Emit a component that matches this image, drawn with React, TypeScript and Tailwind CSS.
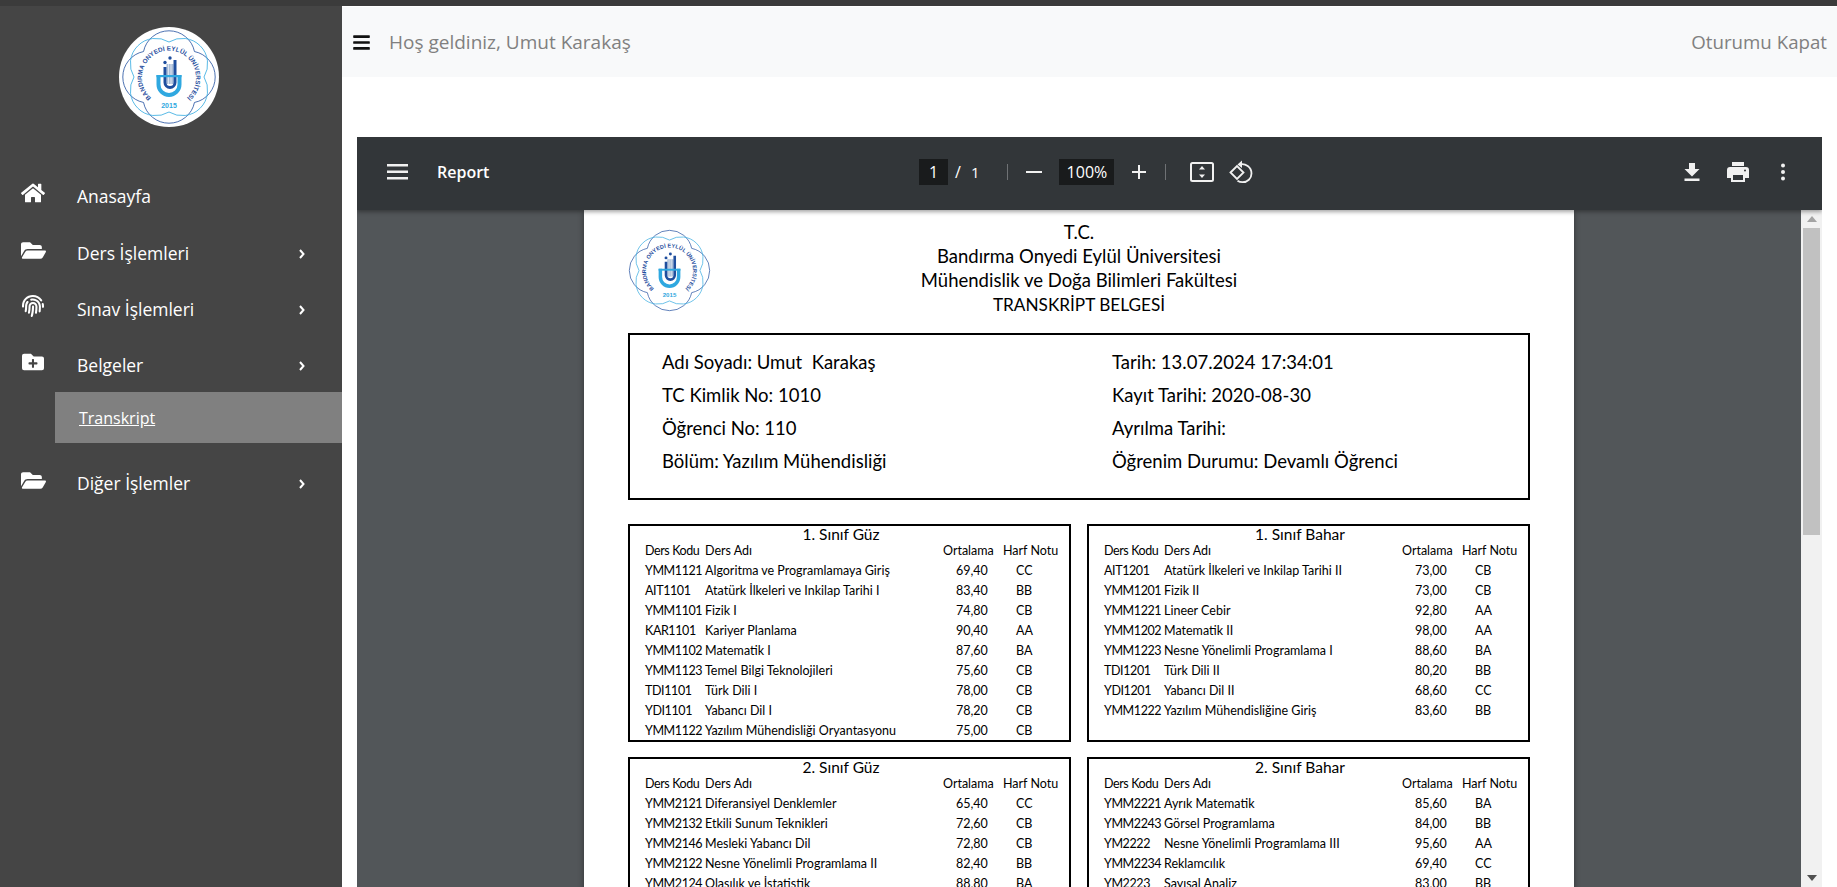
import React from "react";
import { FaHome, FaFolderOpen, FaFingerprint, FaFolderPlus, FaBars } from "react-icons/fa";

function lobes(start: number, cusp: number, r: number) {
  let d = "";
  for (let i = 0; i < 4; i++) {
    const c = start + i * 90;
    const a = ((c - 45 - 90) * Math.PI) / 180;
    const b = ((c + 45 - 90) * Math.PI) / 180;
    const x1 = 50 + cusp * Math.cos(a);
    const y1 = 50 + cusp * Math.sin(a);
    const x2 = 50 + cusp * Math.cos(b);
    const y2 = 50 + cusp * Math.sin(b);
    d += `${i === 0 ? "M" : "L"}${x1.toFixed(2)} ${y1.toFixed(2)}A${r} ${r} 0 0 1 ${x2.toFixed(2)} ${y2.toFixed(2)}`;
  }
  return d + "Z";
}

function Seal({ id, ring, size }: { id: string; ring: boolean; size: number }) {
  return (
    <svg width={size} height={size} viewBox="0 0 100 100" className="block shrink-0">
      {ring && <circle cx="50" cy="50" r="50" fill="#ffffff" />}
      <path d={lobes(0, 36, 26)} fill="none" stroke="#1f4e9e" strokeWidth="0.8" />
      <path d={lobes(45, 35, 25.5)} fill="none" stroke="#2fa8e0" strokeWidth="0.8" />
      <defs>
        <path id={id} d="M33 71.500A27 27 0 1 1 67 71.500" />
      </defs>
      <text fontFamily="'Liberation Sans', sans-serif" fontSize="6.300" fontWeight="700" fill="#1f4e9e">
        <textPath href={`#${id}`} startOffset="50%" textAnchor="middle" textLength="130">BANDIRMA ONYEDİ EYLÜL ÜNİVERSİTESİ</textPath>
      </text>
      <path d="M39.500 48V57.500a10.500 10.500 0 0 0 21 0V48" fill="none" stroke="#2fa8e0" strokeWidth="4" />
      <rect x="47.500" y="37" width="7" height="20" fill="#a9bdd8" />
      <path d="M49.500 37v20M52 37v20" stroke="#ffffff" strokeWidth="0.6" />
      <path d="M46 40V55.500a5 5 0 0 0 10 0V33" fill="none" stroke="#1f4e9e" strokeWidth="3" />
      <rect x="37.500" y="48" width="25" height="2.200" fill="#2fa8e0" />
      <circle cx="46" cy="35.500" r="1.700" fill="#1f4e9e" />
      <circle cx="51" cy="31" r="1.700" fill="#1f4e9e" />
      <text x="50" y="81" textAnchor="middle" fontFamily="'Liberation Sans', sans-serif" fontWeight="700" fontSize="7" fill="#2fa8e0">2015</text>
    </svg>
  );
}

const nav = [
  { icon: <FaFolderOpen size={25} />, label: "Ders İşlemleri" },
  { icon: <FaFingerprint size={22} />, label: "Sınav İşlemleri" },
  { icon: <FaFolderPlus size={22} />, label: "Belgeler" },
];

function NavRow({ icon, label, chevron = true }: { icon: React.ReactNode; label: string; chevron?: boolean }) {
  return (
    <div className="flex h-[56px] items-center pl-[20px] text-white">
      <span className="flex w-[57px] -translate-y-[3px] items-center"><span className="flex w-[26px] justify-center">{icon}</span></span>
      <span className="text-[17.5px]">{label}</span>
      {chevron && (
        <svg width="6" height="10" viewBox="0 0 6 10" className="ml-auto mr-[37px] translate-y-px">
          <path d="M1 1l3.500 4L1 9" fill="none" stroke="#ffffff" strokeWidth="2" />
        </svg>
      )}
    </div>
  );
}

type Row = [string, string, string, string];
const terms: { title: string; rows: Row[] }[] = [
  {
    title: "1. Sınıf Güz",
    rows: [
      ["YMM1121", "Algoritma ve Programlamaya Giriş", "69,40", "CC"],
      ["AIT1101", "Atatürk İlkeleri ve Inkilap Tarihi I", "83,40", "BB"],
      ["YMM1101", "Fizik I", "74,80", "CB"],
      ["KAR1101", "Kariyer Planlama", "90,40", "AA"],
      ["YMM1102", "Matematik I", "87,60", "BA"],
      ["YMM1123", "Temel Bilgi Teknolojileri", "75,60", "CB"],
      ["TDI1101", "Türk Dili I", "78,00", "CB"],
      ["YDI1101", "Yabancı Dil I", "78,20", "CB"],
      ["YMM1122", "Yazılım Mühendisliği Oryantasyonu", "75,00", "CB"],
    ],
  },
  {
    title: "1. Sınıf Bahar",
    rows: [
      ["AIT1201", "Atatürk İlkeleri ve Inkilap Tarihi II", "73,00", "CB"],
      ["YMM1201", "Fizik II", "73,00", "CB"],
      ["YMM1221", "Lineer Cebir", "92,80", "AA"],
      ["YMM1202", "Matematik II", "98,00", "AA"],
      ["YMM1223", "Nesne Yönelimli Programlama I", "88,60", "BA"],
      ["TDI1201", "Türk Dili II", "80,20", "BB"],
      ["YDI1201", "Yabancı Dil II", "68,60", "CC"],
      ["YMM1222", "Yazılım Mühendisliğine Giriş", "83,60", "BB"],
    ],
  },
  {
    title: "2. Sınıf Güz",
    rows: [
      ["YMM2121", "Diferansiyel Denklemler", "65,40", "CC"],
      ["YMM2132", "Etkili Sunum Teknikleri", "72,60", "CB"],
      ["YMM2146", "Mesleki Yabancı Dil", "72,80", "CB"],
      ["YMM2122", "Nesne Yönelimli Programlama II", "82,40", "BB"],
      ["YMM2124", "Olasılık ve İstatistik", "88,80", "BA"],
    ],
  },
  {
    title: "2. Sınıf Bahar",
    rows: [
      ["YMM2221", "Ayrık Matematik", "85,60", "BA"],
      ["YMM2243", "Görsel Programlama", "84,00", "BB"],
      ["YM2222", "Nesne Yönelimli Programlama III", "95,60", "AA"],
      ["YMM2234", "Reklamcılık", "69,40", "CC"],
      ["YM2223", "Sayısal Analiz", "83,00", "BB"],
    ],
  },
];

function Term({ title, rows }: { title: string; rows: Row[] }) {
  return (
    <div className="h-[218px] border-2 border-black pl-[15px]">
      <div className="h-[18px] pr-[32px] text-center text-[15.5px] leading-[16px]">{title}</div>
      <div className="mb-[3px] grid h-[14px] grid-cols-[60px_238px_60px_1fr] text-[12.5px] leading-[14px]">
        <span className="tracking-[-0.4px]">Ders Kodu</span>
        <span>Ders Adı</span>
        <span>Ortalama</span>
        <span>Harf Notu</span>
      </div>
      {rows.map((r) => (
        <div key={r[0]} className="grid h-[20px] grid-cols-[60px_238px_60px_1fr] text-[12.5px] leading-[20px]">
          <span className="tracking-[-0.4px]">{r[0]}</span>
          <span>{r[1]}</span>
          <span className="pl-[13px]">{r[2]}</span>
          <span className="pl-[13px]">{r[3]}</span>
        </div>
      ))}
    </div>
  );
}

function Sep() {
  return <span className="h-[16px] w-px bg-[#6f7275]" />;
}

export default function App() {
  return (
    <div className="flex h-screen flex-col overflow-hidden bg-white font-['Open_Sans',sans-serif]">
      <div className="h-[6px] shrink-0 bg-[#3b3b3b]" />
      <div className="flex min-h-0 flex-1">
        <aside className="w-[342px] shrink-0 bg-[#454545]">
          <div className="flex h-[162px] justify-center pr-[4px] pt-[21px]">
            <Seal id="seal-a" ring size={100} />
          </div>
          <div className="mb-px">
            <NavRow icon={<FaHome size={24} />} label="Anasayfa" chevron={false} />
          </div>
          {nav.map((n) => (
            <NavRow key={n.label} icon={n.icon} label={n.label} />
          ))}
          <div className="-mt-px ml-[55px] flex h-[51px] items-center bg-[#808080] pl-[24px] text-[16px] text-white underline">Transkript</div>
          <div className="mt-[12px]">
            <NavRow icon={<FaFolderOpen size={25} />} label="Diğer İşlemler" />
          </div>
        </aside>
        <main className="flex min-w-0 flex-1 flex-col">
          <header className="mt-px flex h-[70px] shrink-0 items-center bg-[#f8f9fa] pl-[10px] pr-[10px] text-[19px] text-[#808080]">
            <FaBars size={19} className="mr-[18px] text-[#111]" />
            <span>Hoş geldiniz, Umut Karakaş</span>
            <span className="ml-auto text-[18.7px]">Oturumu Kapat</span>
          </header>
          <section className="mx-[15px] mt-[60px] flex min-h-0 flex-1 flex-col overflow-hidden">
            <div className="relative z-10 flex h-[73px] shrink-0 items-center bg-[#323639] pb-[3px] text-white shadow-[0_2px_4px_rgba(0,0,0,0.35)]">
              <div className="flex w-[562px] items-center pl-[30px]">
                <svg width="22" height="16" viewBox="0 0 22 16" className="mr-[28px]">
                  <path d="M0 0h21v2.500H0zM0 6.500h21V9H0zM0 13h21v2.500H0z" fill="#f1f1f1" />
                </svg>
                <span className="text-[16px] font-semibold">Report</span>
              </div>
              <span className="flex h-[26px] w-[29px] items-center justify-center bg-[#191b1c] text-[16px]">1</span>
              <span className="ml-[7px] text-[16px]">/</span>
              <span className="ml-[10px] mr-[28px] text-[15px]">1</span>
              <Sep />
              <svg width="16" height="16" viewBox="0 0 16 16" className="ml-[18px] mr-[17px]"><path d="M0 7h16v2H0z" fill="#f1f1f1" /></svg>
              <span className="flex h-[26px] w-[55px] items-center justify-center bg-[#191b1c] text-[16px]">100%</span>
              <svg width="16" height="16" viewBox="0 0 16 16" className="ml-[17px] mr-[18px]"><path d="M1 7h6V1h2v6h6v2H9v6H7V9H1z" fill="#f1f1f1" /></svg>
              <Sep />
              <svg width="24" height="20" viewBox="0 0 24 20" className="ml-[24px]">
                <rect x="1" y="1" width="22" height="18" rx="1.500" fill="none" stroke="#f1f1f1" strokeWidth="2" />
                <path d="M12 4l3 3.500H9zM12 16l3-3.500H9z" fill="#f1f1f1" />
              </svg>
              <svg width="24" height="24" viewBox="0 0 24 24" className="ml-[15px]">
                <path d="M1.500 12.500L8 6l6.500 6.500L8 19z" fill="none" stroke="#f1f1f1" strokeWidth="1.800" />
                <path d="M10.500 4.500c6-1.500 12 2.500 12 9 0 5-4 8.700-9 8.700-2 0-3.500-.5-5-1.500" fill="none" stroke="#f1f1f1" strokeWidth="1.800" />
                <path d="M13 .5v7.500L8.500 4.500z" fill="#f1f1f1" />
              </svg>
              <div className="ml-auto flex items-center pr-[36px]">
                <svg width="16" height="18" viewBox="0 0 16 18">
                  <path d="M5 0h6v6h4.500L8 13.500.500 6H5zM.500 15.500h15V18H.500z" fill="#f1f1f1" />
                </svg>
                <svg width="22" height="20" viewBox="0 0 22 20" className="ml-[27px]">
                  <path d="M5 0h12v4H5zM3 5h16a3 3 0 0 1 3 3v8h-4v4H4v-4H0V8a3 3 0 0 1 3-3zm3 8v5h10v-5zm12-5.500a1 1 0 1 0 0 2 1 1 0 0 0 0-2z" fill="#f1f1f1" fillRule="evenodd" />
                </svg>
                <svg width="6" height="18" viewBox="0 0 6 18" className="ml-[31px]">
                  <circle cx="3" cy="2.500" r="2" fill="#f1f1f1" /><circle cx="3" cy="9" r="2" fill="#f1f1f1" /><circle cx="3" cy="15.500" r="2" fill="#f1f1f1" />
                </svg>
              </div>
            </div>
            <div className="flex min-h-0 flex-1 bg-[#525659]">
              <div className="flex min-w-0 flex-1 justify-center overflow-hidden">
                <div className="h-[1400px] w-[990px] shrink-0 bg-white px-[44px] pt-[10px] font-['Lato',sans-serif] text-black shadow-[0_2px_6px_rgba(0,0,0,0.4)]">
                  <div className="grid h-[97px] grid-cols-[1fr_auto_1fr]">
                    <div className="-ml-[2px] pt-[7px]"><Seal id="seal-b" ring={false} size={87} /></div>
                    <div className="text-center text-[18.5px] leading-[24px]">
                      <div>T.C.</div>
                      <div>Bandırma Onyedi Eylül Üniversitesi</div>
                      <div>Mühendislik ve Doğa Bilimleri Fakültesi</div>
                      <div className="translate-y-px text-[17.2px]">TRANSKRİPT BELGESİ</div>
                    </div>
                    <div />
                  </div>
                  <div className="mt-[16px] grid h-[167px] grid-cols-[450px_1fr] border-2 border-black pl-[32px] pt-[11px] text-[18.5px] leading-[33px]">
                    <div>
                      <div>Adı Soyadı: Umut&nbsp; Karakaş</div>
                      <div>TC Kimlik No: 1010</div>
                      <div>Öğrenci No: 110</div>
                      <div>Bölüm: Yazılım Mühendisliği</div>
                    </div>
                    <div>
                      <div>Tarih: 13.07.2024 17:34:01</div>
                      <div>Kayıt Tarihi: 2020-08-30</div>
                      <div>Ayrılma Tarihi:</div>
                      <div>Öğrenim Durumu: Devamlı Öğrenci</div>
                    </div>
                  </div>
                  <div className="mt-[24px] grid grid-cols-2 gap-x-[16px] gap-y-[15px]">
                    {terms.map((t) => (
                      <Term key={t.title} title={t.title} rows={t.rows} />
                    ))}
                  </div>
                </div>
              </div>
              <div className="flex w-[21px] shrink-0 flex-col items-center bg-[#f1f1f1]">
                <svg width="10" height="6" viewBox="0 0 10 6" className="mt-[6px]"><path d="M5 0l5 6H0z" fill="#a3a3a3" /></svg>
                <div className="mt-[6px] h-[307px] w-[17px] bg-[#c1c1c1]" />
                <svg width="10" height="6" viewBox="0 0 10 6" className="mb-[6px] mt-auto"><path d="M0 0h10L5 6z" fill="#505050" /></svg>
              </div>
            </div>
          </section>
        </main>
      </div>
    </div>
  );
}
